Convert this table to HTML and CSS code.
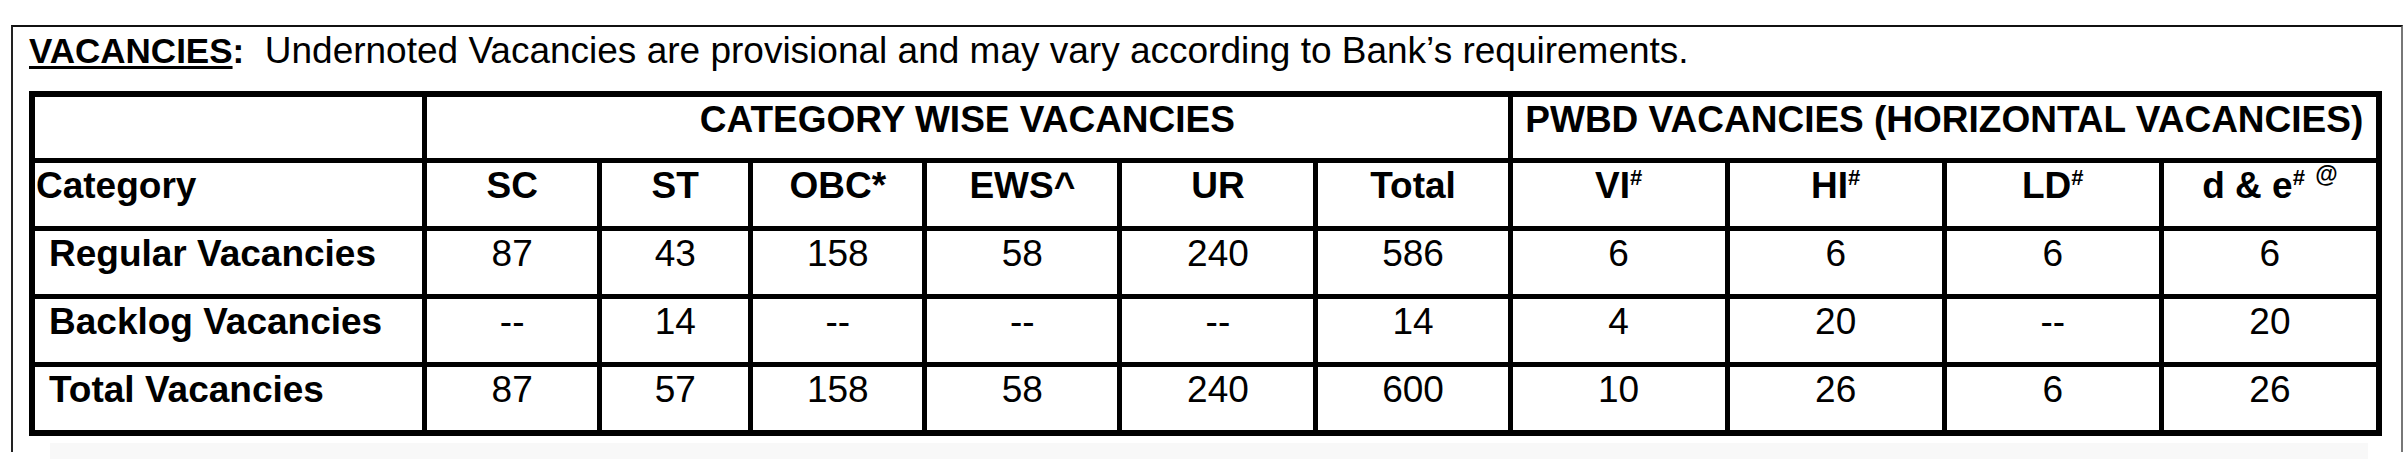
FILE: index.html
```html
<!DOCTYPE html>
<html lang="en">
<head>
<meta charset="utf-8">
<title>Vacancies</title>
<link rel="stylesheet" href="styles.css">
</head>
<body>
<div class="frame">
  <p class="intro"><span class="label"><span class="ul">VACANCIES</span>:</span>&nbsp; Undernoted Vacancies are provisional and may vary according to Bank’s requirements.</p>
  <table class="vac">
    <colgroup>
      <col class="w-cat">
      <col class="w-sc">
      <col class="w-st">
      <col class="w-obc">
      <col class="w-ews">
      <col class="w-ur">
      <col class="w-tot">
      <col class="w-pw">
      <col class="w-pw">
      <col class="w-pw">
      <col class="w-pw">
    </colgroup>
    <thead>
      <tr class="r-group">
        <th class="blank"></th>
        <th colspan="6">CATEGORY WISE VACANCIES</th>
        <th colspan="4">PWBD VACANCIES (HORIZONTAL VACANCIES)</th>
      </tr>
      <tr class="r-head">
        <th class="lead">Category</th>
        <th>SC</th>
        <th>ST</th>
        <th>OBC*</th>
        <th>EWS^</th>
        <th>UR</th>
        <th>Total</th>
        <th>VI<sup>#</sup></th>
        <th>HI<sup>#</sup></th>
        <th>LD<sup>#</sup></th>
        <th>d &amp; e<sup>#</sup> <sup class="at">@</sup></th>
      </tr>
    </thead>
    <tbody>
      <tr>
        <th class="row">Regular Vacancies</th>
        <td>87</td><td>43</td><td>158</td><td>58</td><td>240</td><td>586</td>
        <td>6</td><td>6</td><td>6</td><td>6</td>
      </tr>
      <tr>
        <th class="row">Backlog Vacancies</th>
        <td>--</td><td>14</td><td>--</td><td>--</td><td>--</td><td>14</td>
        <td>4</td><td>20</td><td>--</td><td>20</td>
      </tr>
      <tr>
        <th class="row">Total Vacancies</th>
        <td>87</td><td>57</td><td>158</td><td>58</td><td>240</td><td>600</td>
        <td>10</td><td>26</td><td>6</td><td>26</td>
      </tr>
    </tbody>
  </table>
  <div class="shade"></div>
</div>
</body>
</html>
```

FILE: styles.css
```css
html, body {
  margin: 0;
  padding: 0;
  background: #ffffff;
}

body {
  width: 2406px;
  height: 466px;
  overflow: hidden;
  font-family: "Liberation Sans", Arial, sans-serif;
  color: #000;
}

.frame {
  box-sizing: border-box;
  margin: 25px 3px 0 11px;
  height: 427px;
  border-top: 2px solid #111;
  border-left: 2px solid #222;
  border-right: 2px solid #777;
}

.intro {
  margin: 4px 0 0 16px;
  font-size: 37px;
  line-height: 40px;
  white-space: nowrap;
}

.label {
  font-weight: bold;
  font-size: 35px;
}

.ul {
  text-decoration: underline;
  text-decoration-thickness: 3px;
  text-underline-offset: 3px;
}

.vac {
  margin: 20px 0 0 16px;
  table-layout: fixed;
  border-collapse: separate;
  border-spacing: 5px;
  border: 1px solid #000;
  background: #000;
  width: 2353px;
  font-size: 37px;
  line-height: 40px;
}

.w-cat { width: 387px; }
.w-sc  { width: 170px; }
.w-st  { width: 146px; }
.w-obc { width: 169px; }
.w-ews { width: 190px; }
.w-ur  { width: 191px; }
.w-tot { width: 189px; }
.w-pw  { width: 212px; }

.vac th,
.vac td {
  background: #fff;
  padding: 3px 0 0 0;
  vertical-align: top;
  text-align: center;
  white-space: nowrap;
  overflow: visible;
}

.vac th {
  font-weight: bold;
}

.vac td {
  font-weight: normal;
}

.r-group th {
  height: 58px;
}

.r-head th,
.vac tbody th,
.vac tbody td {
  height: 60px;
}

.vac th.lead {
  text-align: left;
  padding-left: 1px;
}

.vac th.row {
  text-align: left;
  padding-left: 14px;
}

.vac sup {
  font-size: 22px;
  line-height: 0;
  vertical-align: 13px;
}

.vac sup.at {
  font-size: 23px;
  vertical-align: 16px;
}

.shade {
  margin: 7px 33px 0 37px;
  height: 16px;
  background: #f8f8f8;
}
```
